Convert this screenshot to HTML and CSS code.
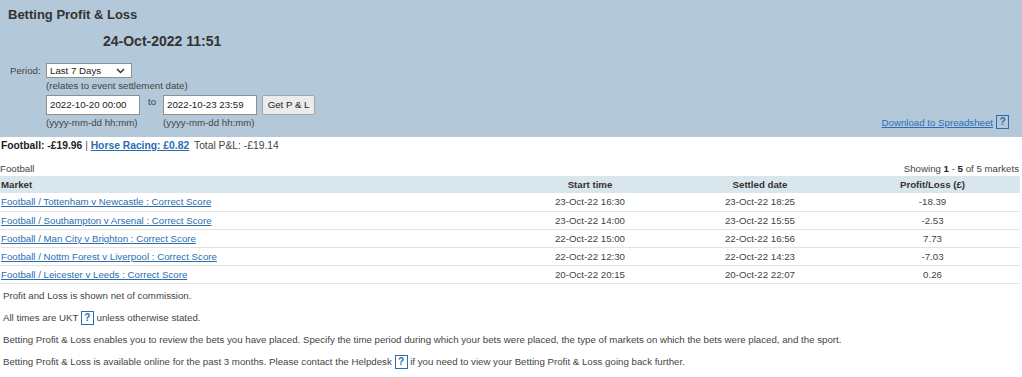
FILE: index.html
```html
<!DOCTYPE html>
<html>
<head>
<meta charset="utf-8">
<link rel="stylesheet" href="styles.css">
</head>
<body>
<div class="panel">
  <h1 class="title">Betting Profit &amp; Loss</h1>
  <div class="stamp">24-Oct-2022 11:51</div>
  <div class="filters">
    <div class="form">
      <div class="period">
        <span class="label">Period:</span>
        <div class="select">Last 7 Days
          <svg class="chev" width="9" height="6" viewBox="0 0 9 6"><path d="M1 1l3.5 3.5L8 1" fill="none" stroke="#333" stroke-width="1.5"/></svg>
        </div>
      </div>
      <div class="note">(relates to event settlement date)</div>
      <div class="dates">
        <div class="dcol">
          <div class="input">2022-10-20 00:00</div>
          <div class="hint">(yyyy-mm-dd hh:mm)</div>
        </div>
        <span class="to">to</span>
        <div class="dcol">
          <div class="input">2022-10-23 23:59</div>
          <div class="hint">(yyyy-mm-dd hh:mm)</div>
        </div>
        <div class="btn">Get P &amp; L</div>
      </div>
    </div>
    <div class="download"><a href="#">Download to Spreadsheet</a><span class="help">?</span></div>
  </div>
</div>

<div class="summary"><b>Football: -£19.96</b> <span class="sep">|</span> <a href="#" class="strong">Horse Racing: £0.82</a> <span class="total">Total P&amp;L: -£19.14</span></div>

<div class="caption"><span>Football</span><span>Showing <b>1</b> - <b>5</b> of 5 markets</span></div>

<table class="grid">
  <colgroup><col class="c1"><col class="c2"><col class="c3"><col class="c4"></colgroup>
  <thead>
    <tr><th class="left">Market</th><th>Start time</th><th>Settled date</th><th>Profit/Loss (£)</th></tr>
  </thead>
  <tbody>
    <tr><td class="left"><a href="#">Football / Tottenham v Newcastle : Correct Score</a></td><td>23-Oct-22 16:30</td><td>23-Oct-22 18:25</td><td>-18.39</td></tr>
    <tr><td class="left"><a href="#">Football / Southampton v Arsenal : Correct Score</a></td><td>23-Oct-22 14:00</td><td>23-Oct-22 15:55</td><td>-2.53</td></tr>
    <tr><td class="left"><a href="#">Football / Man City v Brighton : Correct Score</a></td><td>22-Oct-22 15:00</td><td>22-Oct-22 16:56</td><td>7.73</td></tr>
    <tr><td class="left"><a href="#">Football / Nottm Forest v Liverpool : Correct Score</a></td><td>22-Oct-22 12:30</td><td>22-Oct-22 14:23</td><td>-7.03</td></tr>
    <tr><td class="left"><a href="#">Football / Leicester v Leeds : Correct Score</a></td><td>20-Oct-22 20:15</td><td>20-Oct-22 22:07</td><td>0.26</td></tr>
  </tbody>
</table>

<div class="notes">
  <p>Profit and Loss is shown net of commission.</p>
  <p>All times are UKT <span class="help">?</span> unless otherwise stated.</p>
  <p>Betting Profit &amp; Loss enables you to review the bets you have placed. Specify the time period during which your bets were placed, the type of markets on which the bets were placed, and the sport.</p>
  <p>Betting Profit &amp; Loss is available online for the past 3 months. Please contact the Helpdesk <span class="help">?</span> if you need to view your Betting Profit &amp; Loss going back further.</p>
</div>
</body>
</html>
```

FILE: styles.css
```css
* { box-sizing: border-box; }
body {
  margin: 0;
  font-family: "Liberation Sans", Arial, sans-serif;
  font-size: 9.7px;
  color: #333;
  background: #fff;
}
a { color: #2a6db0; text-decoration: underline; }

.panel {
  background: #b3c9d9;
  padding: 7px 13px 10px 8px;
  height: 137px;
}
.title {
  margin: 0;
  font-size: 13px;
  line-height: 16px;
  font-weight: bold;
  color: #333;
}
.stamp {
  margin: 10px 0 0 95px;
  font-size: 14px;
  line-height: 16px;
  font-weight: bold;
  color: #333;
}
.filters {
  display: flex;
  justify-content: space-between;
  align-items: flex-end;
  margin-top: 14px;
}
.form { margin-left: 2px; }
.period { display: flex; align-items: center; height: 15px; }
.label { width: 36px; color: #444; }
.select {
  width: 86px;
  height: 15px;
  background: #fff;
  border: 1px solid #8f8f8f;
  display: flex;
  align-items: center;
  justify-content: space-between;
  padding: 0 6px 0 3px;
  color: #222;
}
.note { margin-left: 36px; line-height: 14px; margin-top: 1px; color: #444; }
.dates { display: flex; align-items: flex-start; margin-left: 36px; margin-top: 2px; }
.dcol { display: flex; flex-direction: column; }
.input {
  width: 94px;
  height: 20px;
  background: #fff;
  border: 1px solid #8f8f8f;
  padding: 0 3px;
  line-height: 18px;
  color: #222;
}
.hint { line-height: 14px; margin-top: 1px; color: #444; }
.to { margin: 1px 7px 0 8px; color: #444; }
.btn {
  margin-left: 5px;
  height: 20px;
  width: 53px;
  border: 1px solid #a6a6a6;
  border-radius: 2px;
  background: #ebebeb;
  text-align: center;
  line-height: 18px;
  color: #222;
}
.download { display: flex; align-items: center; margin-bottom: 1px; }
.download a { margin-right: 3px; }
.help {
  display: inline-block;
  width: 13px;
  height: 14px;
  border: 1px solid #2a6db0;
  color: #2a6db0;
  font-weight: bold;
  text-align: center;
  line-height: 12px;
  font-size: 10px;
  vertical-align: middle;
}
.notes .help { background: #fff; }

.summary {
  margin-top: 2px;
  line-height: 14px;
  padding-left: 1px;
  color: #222;
  font-size: 10.3px;
}
.summary b { color: #222; }
.summary .strong { font-weight: bold; }
.sep { color: #555; }
.total { color: #444; margin-left: 2px; }

.caption {
  display: flex;
  justify-content: space-between;
  margin-top: 9px;
  line-height: 14px;
  padding-right: 3px;
  color: #444;
}
.caption b { color: #222; }

.grid {
  width: 1020px;
  border-collapse: collapse;
}
.c1 { width: 505px; }
.c2 { width: 170px; }
.c3 { width: 170px; }
.grid th {
  background: #d9e6ec;
  height: 17px;
  padding: 0;
  font-weight: bold;
  color: #333;
  text-align: center;
}
.grid td {
  height: 18px;
  padding: 0;
  text-align: center;
  border-bottom: 1px solid #e3e3e3;
  color: #444;
}
.grid .left { text-align: left; padding-left: 1px; }

.notes { padding-left: 3px; margin-top: 5px; color: #444; }
.notes p { margin: 0 0 8px; line-height: 14px; }
```
